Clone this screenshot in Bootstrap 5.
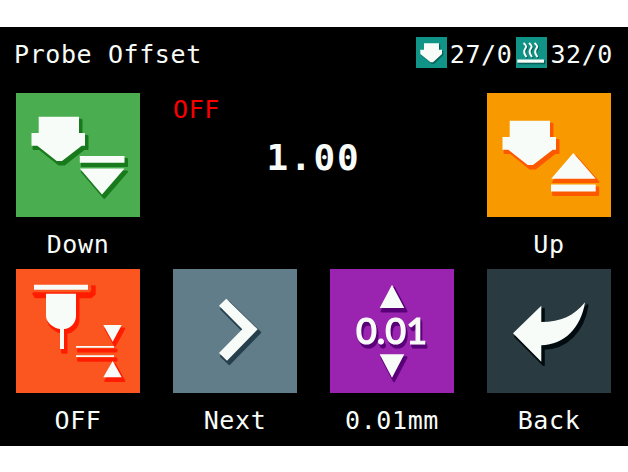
<!DOCTYPE html>
<html lang="en">
<head>
<meta charset="utf-8">
<meta name="viewport" content="width=device-width, initial-scale=1">
<title>Probe Offset</title>
<link rel="stylesheet" href="https://cdn.jsdelivr.net/npm/bootstrap@5.3.0/dist/css/bootstrap.min.css">
<style>
body{background:#fff;overflow:hidden}
.device{margin-top:27px;height:419px;background:#000;color:#f8fcf8;font:25px/30px "DejaVu Sans Mono",monospace;letter-spacing:.6px}
.device svg{display:block;flex:none;overflow:hidden}
.titlebar{padding:10px 15px 0 14px;height:66px}
.heading{padding-top:3px}
.reading{padding:3px 0 0 3px}
.controls{display:grid;grid-template-columns:repeat(4,124px);column-gap:33px;padding-left:16px}
.key{height:176px;padding:0;border:0;background:none;color:inherit;font:inherit;letter-spacing:inherit}
.key span{margin-top:13px;white-space:nowrap}
.readout{grid-column:span 2}
.state{color:#f80000;margin-top:1px;line-height:32px}
.amount{font-size:36px;font-weight:700;line-height:44px;letter-spacing:1.8px;margin-top:10px}
.teal{background:#109488}.green{background:#4aae50}.orange{background:#f89900}.red{background:#fb5620}
.slate{background:#627d8a}.purple{background:#9a24b0}.dark{background:#293a40}
.face{fill:#f8fcf8}
.shade{fill:var(--s);stroke:var(--s);stroke-width:2.4;stroke-linejoin:round}
.green{--s:#187a1c}.orange{--s:#fc5800}.red{--s:#ff1c00}.slate{--s:#263f4c}.purple{--s:#590078}.dark{--s:#020c10}.teal{--s:#086058}
.step{font:500 36px Lato,sans-serif;letter-spacing:0;stroke:#f8fcf8;stroke-width:1.2;filter:drop-shadow(1.5px 2px 0 var(--s)) drop-shadow(1.5px 2px 0 var(--s))}
</style>
<script src="https://cdn.jsdelivr.net/npm/bootstrap@5.3.0/dist/js/bootstrap.bundle.min.js"></script>
</head>
<body>
<main class="device">
  <header class="titlebar d-flex justify-content-between align-items-start">
    <div class="heading">Probe Offset</div>
    <div class="d-flex">
      <svg class="teal" width="31" height="31" viewBox="0 0 31 31">
        <path class="shade" style="stroke-width:.6" transform="translate(1 1.2)" d="M8 6.3H23V12.7H26V17L17 25.3H14.5L4.3 17V12.7H8Z"/>
        <path class="face" d="M8 6.3H23V12.7H26V17L17 25.3H14.5L4.3 17V12.7H8Z"/>
      </svg>
      <div class="reading">27/0</div>
      <svg class="teal ms-1" width="31" height="31" viewBox="0 0 31 31">
        <path class="shade" style="stroke-width:.6" d="M2.3 23.8H29V27H2.3Z"/>
        <path class="face" d="M1.3 22.5H28V25.7H1.3Z"/>
        <g fill="none" stroke-width="2">
          <path stroke="#086058" transform="translate(1 1)" d="M7.5 6C11 9 10.5 10 9 12S7.5 16 10.5 20M13 6C16.5 9 16 10 14.5 12S13 16 16 20M18.500 6C22 9 21.500 10 20 12S18.500 16 21.500 20"/>
          <path stroke="#f8fcf8" d="M7.5 6C11 9 10.5 10 9 12S7.5 16 10.5 20M13 6C16.5 9 16 10 14.5 12S13 16 16 20M18.500 6C22 9 21.500 10 20 12S18.500 16 21.500 20"/>
        </g>
      </svg>
      <div class="reading">32/0</div>
    </div>
  </header>
  <section class="controls">
    <button class="key d-flex flex-column align-items-center justify-content-start" type="button">
      <svg class="green" width="124" height="124" viewBox="0 0 124 124">
        <defs><path id="down" d="M22.700 23.700H63V40H69V52.700H65.700L46 68H40.700L21.300 52.700H15.500V40H22.700ZM63.800 63H108.500V69.700H63.800ZM63.800 75.600H108.500L86 101.500Z"/></defs>
        <use href="#down" class="shade" x="2.300" y="3.200"/><use href="#down" class="face"/>
      </svg><span>Down</span>
    </button>
    <div class="readout">
      <div class="state">OFF</div>
      <div class="amount text-center">1.00</div>
    </div>
    <button class="key d-flex flex-column align-items-center justify-content-start" type="button">
      <svg class="orange" width="124" height="124" viewBox="0 0 124 124">
        <defs><path id="up" d="M22.700 27.700H63V44H69V56.700H65.700L46 72H40.700L21.300 56.700H15.500V44H22.700ZM86.300 60L108.700 85.700H64.200ZM64 91.600H108.700V98.500H64Z"/></defs>
        <use href="#up" class="shade" x="2.300" y="3.200"/><use href="#up" class="face"/>
      </svg><span>Up</span>
    </button>
    <button class="key d-flex flex-column align-items-center justify-content-start" type="button">
      <svg class="red" width="124" height="124" viewBox="0 0 124 124">
        <path class="shade" d="M17.500 24.500H74C76 23 77 20 76 17.500H78.500V25L75 28H19.500Z"/>
        <defs><path id="probe" d="M30 24.700H60V47C60 54 54 60 48 60V80H44V60C37 59 30 53 30 47ZM87.300 56H105.700L96.700 72.700ZM60 77H98V78.700H60ZM60 86.200H98V88H60ZM96.700 92L105.700 108.300H87.300Z"/></defs>
        <use href="#probe" class="shade" x="2.300" y="3.600"/><use href="#probe" class="face"/>
        <path class="face" d="M18 15.700H72V20.700H18Z"/>
      </svg><span>OFF</span>
    </button>
    <button class="key d-flex flex-column align-items-center justify-content-start" type="button">
      <svg class="slate" width="124" height="124" viewBox="0 0 124 124">
        <defs><path id="next" d="M53.300 29.700L84.700 60.300L54 91.700L46 84L69.300 60.300L46 36.700Z"/></defs>
        <use href="#next" class="shade" x="2.300" y="3.200"/><use href="#next" class="face"/>
      </svg><span>Next</span>
    </button>
    <button class="key d-flex flex-column align-items-center justify-content-start" type="button">
      <svg class="purple" width="124" height="124" viewBox="0 0 124 124">
        <defs><path id="arrows" d="M62 15.700L74.300 39H49.700ZM49.700 85.300H74.300L62 108.700Z"/></defs>
        <use href="#arrows" class="shade" x="2" y="3.200"/>
        <use href="#arrows" class="face"/>
        <text class="step face" x="61.500" y="75" text-anchor="middle">0.01</text>
      </svg><span>0.01mm</span>
    </button>
    <button class="key d-flex flex-column align-items-center justify-content-start" type="button">
      <svg class="dark" width="124" height="124" viewBox="0 0 124 124">
        <defs><path id="back" d="M26 64.300L54.300 36.700V53C74 53 87 47 98 33.300C94 59 77 76 54.300 76.300V92.700Z"/></defs>
        <use href="#back" class="shade" x="2.300" y="3.200"/><use href="#back" class="face"/>
      </svg><span>Back</span>
    </button>
  </section>
</main>
</body>
</html>
